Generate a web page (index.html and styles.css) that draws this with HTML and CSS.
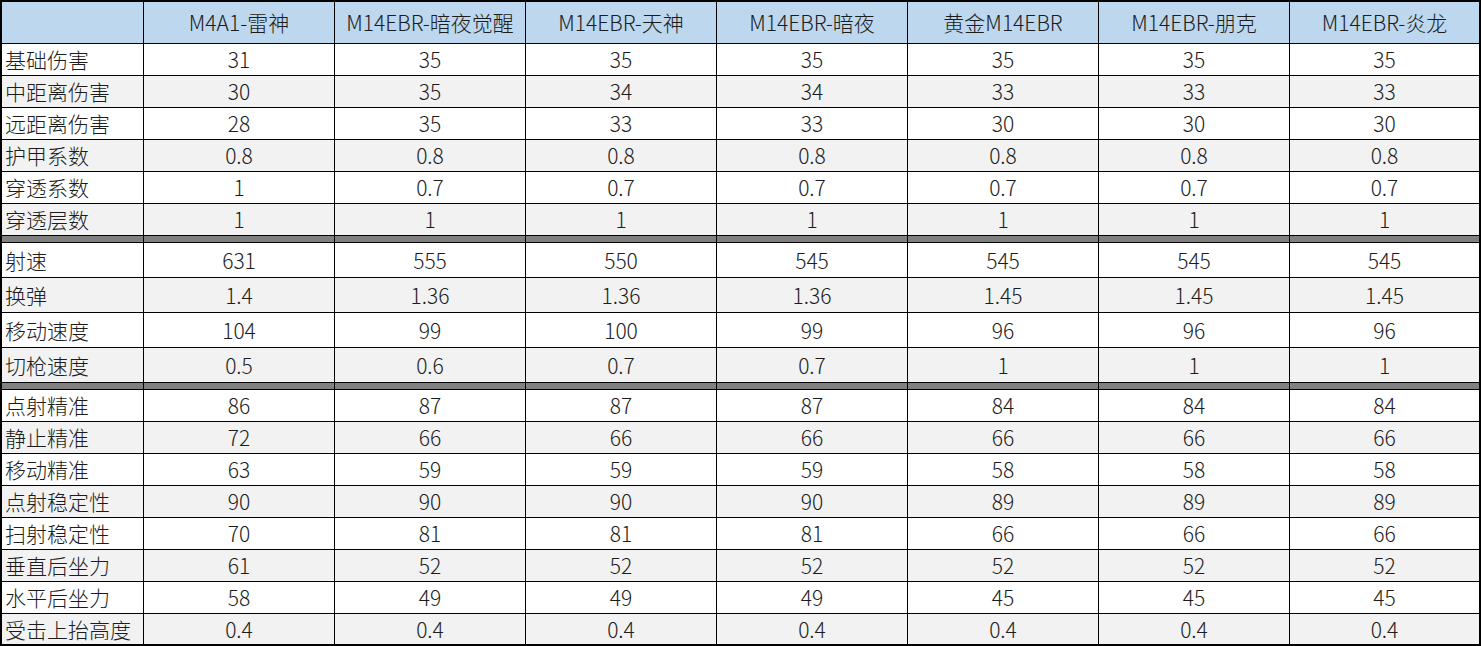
FILE: index.html
```html
<!DOCTYPE html>
<html lang="zh">
<head>
<meta charset="utf-8">
<title>武器数据对比</title>
<link rel="stylesheet" href="styles.css">
</head>
<body>
<div class="sheet">
  <div class="row head"><div class="c"></div><div class="c">M4A1-雷神</div><div class="c">M14EBR-暗夜觉醒</div><div class="c">M14EBR-天神</div><div class="c">M14EBR-暗夜</div><div class="c">黄金M14EBR</div><div class="c">M14EBR-朋克</div><div class="c">M14EBR-炎龙</div></div>

  <div class="row"><div class="c l">基础伤害</div><div class="c">31</div><div class="c">35</div><div class="c">35</div><div class="c">35</div><div class="c">35</div><div class="c">35</div><div class="c">35</div></div>
  <div class="row alt"><div class="c l">中距离伤害</div><div class="c">30</div><div class="c">35</div><div class="c">34</div><div class="c">34</div><div class="c">33</div><div class="c">33</div><div class="c">33</div></div>
  <div class="row"><div class="c l">远距离伤害</div><div class="c">28</div><div class="c">35</div><div class="c">33</div><div class="c">33</div><div class="c">30</div><div class="c">30</div><div class="c">30</div></div>
  <div class="row alt"><div class="c l">护甲系数</div><div class="c">0.8</div><div class="c">0.8</div><div class="c">0.8</div><div class="c">0.8</div><div class="c">0.8</div><div class="c">0.8</div><div class="c">0.8</div></div>
  <div class="row"><div class="c l">穿透系数</div><div class="c">1</div><div class="c">0.7</div><div class="c">0.7</div><div class="c">0.7</div><div class="c">0.7</div><div class="c">0.7</div><div class="c">0.7</div></div>
  <div class="row alt"><div class="c l">穿透层数</div><div class="c">1</div><div class="c">1</div><div class="c">1</div><div class="c">1</div><div class="c">1</div><div class="c">1</div><div class="c">1</div></div>

  <div class="row sep"><div class="c"></div><div class="c"></div><div class="c"></div><div class="c"></div><div class="c"></div><div class="c"></div><div class="c"></div><div class="c"></div></div>

  <div class="row tall"><div class="c l">射速</div><div class="c">631</div><div class="c">555</div><div class="c">550</div><div class="c">545</div><div class="c">545</div><div class="c">545</div><div class="c">545</div></div>
  <div class="row tall alt"><div class="c l">换弹</div><div class="c">1.4</div><div class="c">1.36</div><div class="c">1.36</div><div class="c">1.36</div><div class="c">1.45</div><div class="c">1.45</div><div class="c">1.45</div></div>
  <div class="row tall"><div class="c l">移动速度</div><div class="c">104</div><div class="c">99</div><div class="c">100</div><div class="c">99</div><div class="c">96</div><div class="c">96</div><div class="c">96</div></div>
  <div class="row tall alt"><div class="c l">切枪速度</div><div class="c">0.5</div><div class="c">0.6</div><div class="c">0.7</div><div class="c">0.7</div><div class="c">1</div><div class="c">1</div><div class="c">1</div></div>

  <div class="row sep"><div class="c"></div><div class="c"></div><div class="c"></div><div class="c"></div><div class="c"></div><div class="c"></div><div class="c"></div><div class="c"></div></div>

  <div class="row"><div class="c l">点射精准</div><div class="c">86</div><div class="c">87</div><div class="c">87</div><div class="c">87</div><div class="c">84</div><div class="c">84</div><div class="c">84</div></div>
  <div class="row alt"><div class="c l">静止精准</div><div class="c">72</div><div class="c">66</div><div class="c">66</div><div class="c">66</div><div class="c">66</div><div class="c">66</div><div class="c">66</div></div>
  <div class="row"><div class="c l">移动精准</div><div class="c">63</div><div class="c">59</div><div class="c">59</div><div class="c">59</div><div class="c">58</div><div class="c">58</div><div class="c">58</div></div>
  <div class="row alt"><div class="c l">点射稳定性</div><div class="c">90</div><div class="c">90</div><div class="c">90</div><div class="c">90</div><div class="c">89</div><div class="c">89</div><div class="c">89</div></div>
  <div class="row"><div class="c l">扫射稳定性</div><div class="c">70</div><div class="c">81</div><div class="c">81</div><div class="c">81</div><div class="c">66</div><div class="c">66</div><div class="c">66</div></div>
  <div class="row alt"><div class="c l">垂直后坐力</div><div class="c">61</div><div class="c">52</div><div class="c">52</div><div class="c">52</div><div class="c">52</div><div class="c">52</div><div class="c">52</div></div>
  <div class="row"><div class="c l">水平后坐力</div><div class="c">58</div><div class="c">49</div><div class="c">49</div><div class="c">49</div><div class="c">45</div><div class="c">45</div><div class="c">45</div></div>
  <div class="row alt last"><div class="c l">受击上抬高度</div><div class="c">0.4</div><div class="c">0.4</div><div class="c">0.4</div><div class="c">0.4</div><div class="c">0.4</div><div class="c">0.4</div><div class="c">0.4</div></div>
</div>
</body>
</html>
```
FILE: styles.css
```css
html, body {
  margin: 0;
  padding: 0;
  background: #ffffff;
}

body {
  font-family: "Noto Sans CJK SC", "Noto Sans", sans-serif;
  font-size: 21px;
  font-weight: 300;
  color: #1c1c1c;
}

.sheet {
  width: 1481px;
  height: 646px;
  box-sizing: border-box;
  border: 2px solid #000;
  display: flex;
  flex-direction: column;
  overflow: hidden;
}

.row {
  display: grid;
  grid-template-columns: 142px repeat(6, 191px) 189px;
  height: 32px;
  box-sizing: border-box;
  border-bottom: 1px solid #000;
  background: #ffffff;
  flex: none;
}

.row.alt {
  background: #f2f2f2;
}

.row.head {
  height: 42px;
  background: #bdd7ee;
}

.row.tall {
  height: 35px;
}

.row.sep {
  height: 7px;
  background: #808080;
}

.row.last {
  height: 30px;
  border-bottom: none;
}

.c {
  box-sizing: border-box;
  border-right: 1px solid #000;
  display: flex;
  align-items: center;
  justify-content: center;
  white-space: nowrap;
  line-height: 1;
  overflow: hidden;
}

.c:last-child {
  border-right: none;
}

.c.l {
  justify-content: flex-start;
  padding-left: 3px;
}
```
